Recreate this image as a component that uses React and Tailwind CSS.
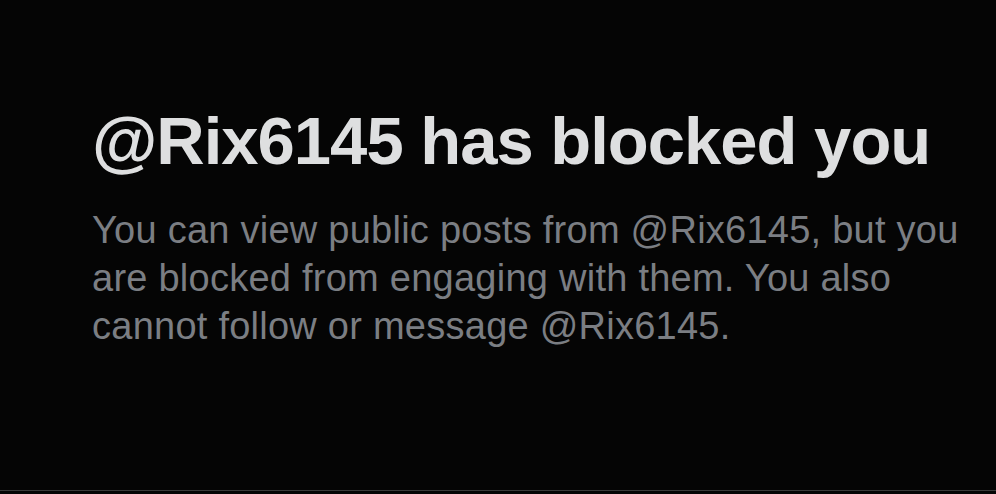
import React from 'react';

// Blocked-profile notice
const App = () => {
    const handle = '@Rix6145';
    const title = `${handle} has blocked you`;
    const body = `You can view public posts from ${handle}, but you are blocked from engaging with them. You also cannot follow or message ${handle}.`;

    return (
        <div className="w-[996px] h-[494px] bg-[#050505] flex flex-col overflow-hidden" style={{ fontFamily: '"Liberation Sans", Arial, sans-serif' }}>
            <main className="flex-1 pl-[92px] pr-[16px] pt-[101px]">
                <h1 className="text-[67px] leading-[80px] font-bold tracking-[-1px] text-[#dedfe0]">
                    {title}
                </h1>
                <p className="mt-[25px] text-[38px] leading-[48px] tracking-[0.25px] text-[#7b7e83]">
                    {body}
                </p>
            </main>
            <div className="h-px bg-[#3a3a3a] mb-[3px]" />
        </div>
    );
};

export default App;
